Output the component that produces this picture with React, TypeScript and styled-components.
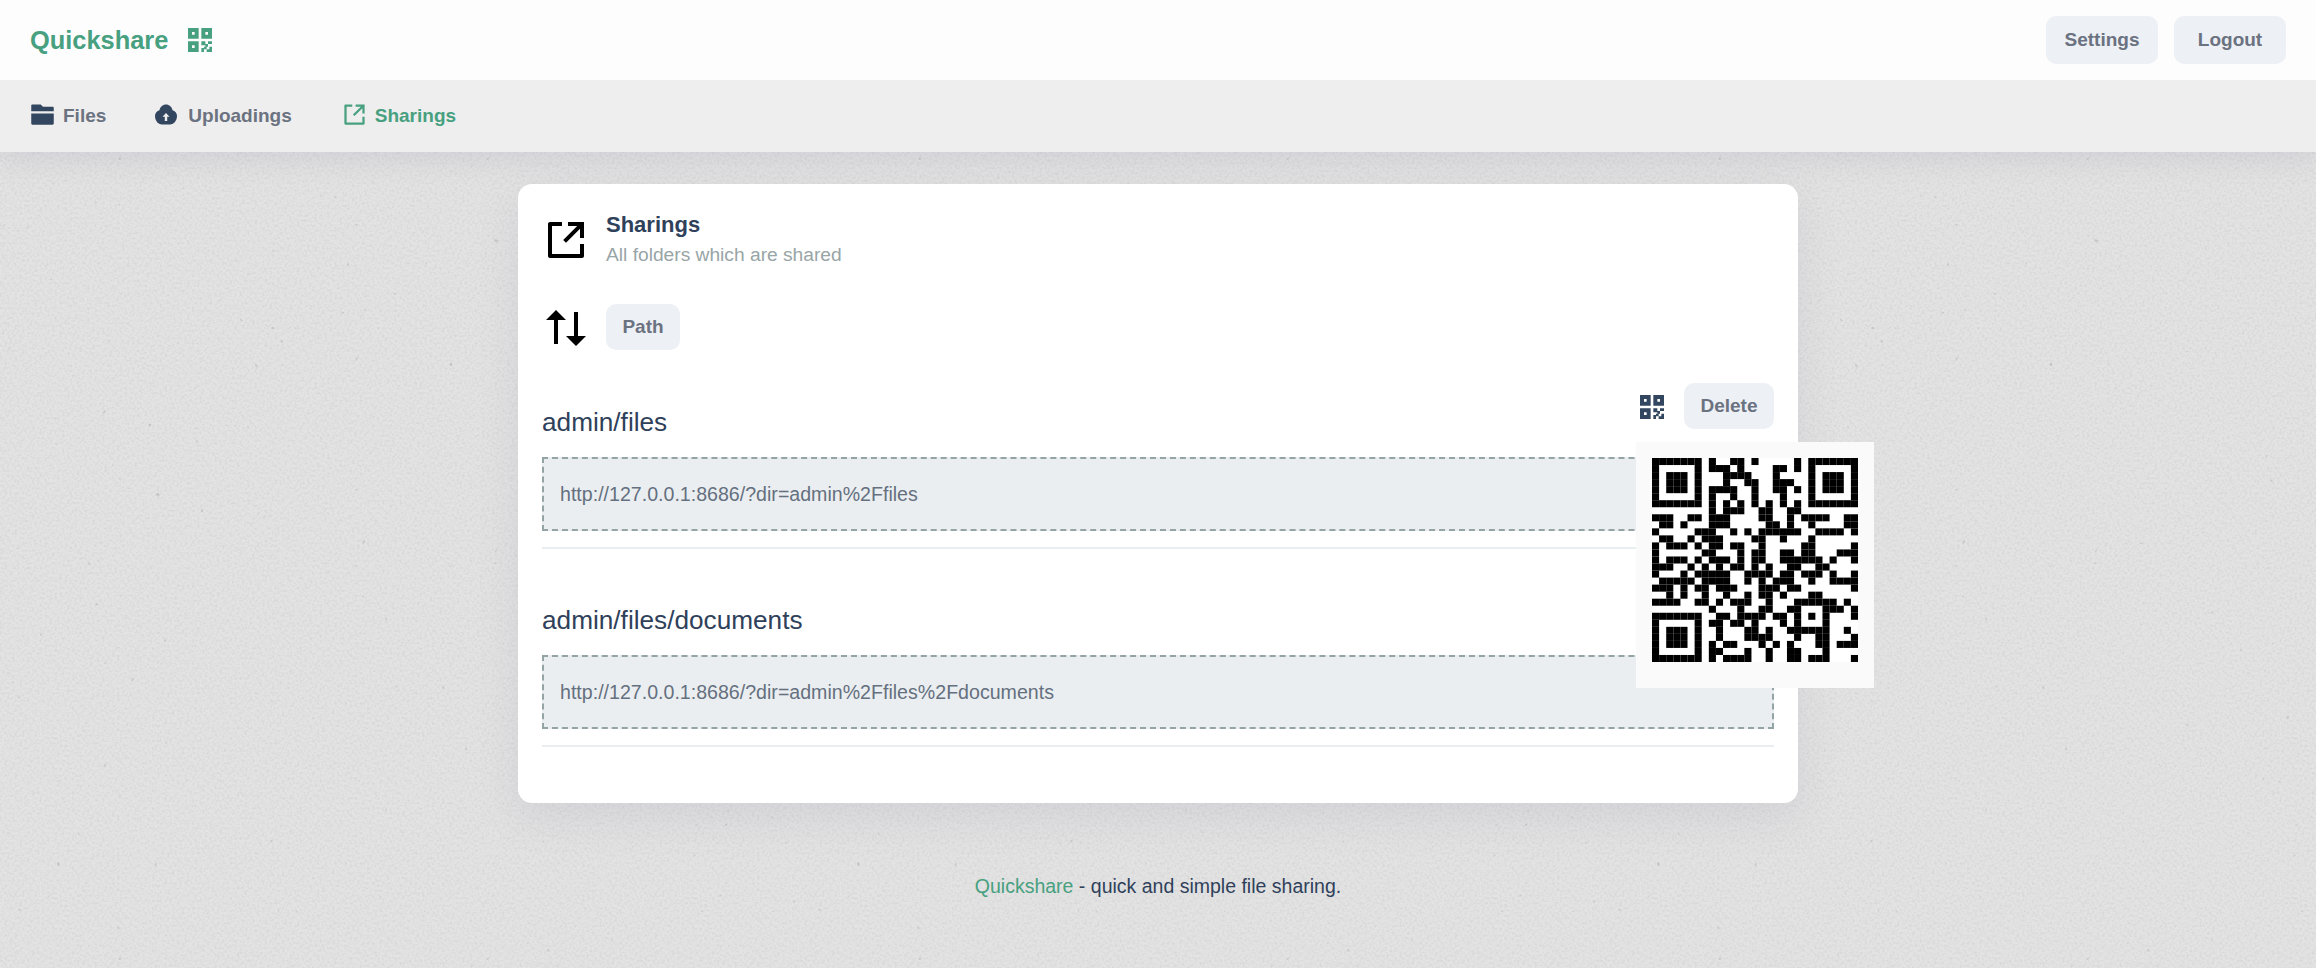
import React from "react";
import styled, { createGlobalStyle } from "styled-components";
import { RiQrCodeFill, RiFolder2Fill, RiShareBoxLine, RiArrowUpDownFill } from "react-icons/ri";

const noise = encodeURIComponent(
  `<svg xmlns='http://www.w3.org/2000/svg' width='800' height='800'><filter id='n' x='0' y='0' width='100%' height='100%'><feTurbulence type='fractalNoise' baseFrequency='0.4' numOctaves='5' seed='7' stitchTiles='stitch'/><feGaussianBlur stdDeviation='0.7'/><feColorMatrix values='0 0 0 0 0.55 0 0 0 0 0.55 0 0 0 0 0.55 0.9 0 0 0 -0.36'/></filter><filter id='s' x='0' y='0' width='100%' height='100%'><feTurbulence type='fractalNoise' baseFrequency='0.13' numOctaves='2' seed='23' stitchTiles='stitch'/><feColorMatrix values='0 0 0 0 0.5 0 0 0 0 0.5 0 0 0 0 0.5 8 0 0 0 -6.5'/><feGaussianBlur stdDeviation='0.6'/></filter><rect width='800' height='800' fill='#e3e3e3'/><rect width='800' height='800' filter='url(#n)'/><rect width='800' height='800' filter='url(#s)'/></svg>`
);

const Global = createGlobalStyle`
  html, body { margin: 0; padding: 0; }
  body {
    min-height: 100vh;
    font-family: "Liberation Sans", Arial, sans-serif;
    background: #dedede url("data:image/svg+xml,${noise}");
  }
  * { box-sizing: border-box; }
`;

const Page = styled.div`
  min-height: 968px;
  display: flex;
  flex-direction: column;
`;
const Header = styled.header`
  position: relative;
  z-index: 1;
  height: 80px;
  background: #fdfdfd;
  display: flex;
  align-items: center;
  justify-content: space-between;
  padding: 0 30px;
`;
const Brand = styled.div`
  display: flex;
  align-items: center;
  gap: 16px;
  color: #47a07f;
  font-size: 25.4px;
  font-weight: 700;
  svg { display: block; }
`;
const HeaderActions = styled.div`
  display: flex;
  gap: 16px;
`;
const Button = styled.button`
  height: ${(p) => (p.$h ? p.$h : 46)}px;
  width: ${(p) => p.$w}px;
  border: 0;
  border-radius: 10px;
  background: #edf0f5;
  color: #6b7280;
  font: 700 19px "Liberation Sans", Arial, sans-serif;
  padding: 0;
`;
const Nav = styled.nav`
  height: 72px;
  background: #eeeeee;
  display: flex;
  align-items: center;
  padding-left: 29px;
  gap: 49px;
  box-shadow: 0 8px 26px rgba(130, 130, 165, 0.16);
`;
const NavItem = styled.div`
  display: flex;
  align-items: center;
  gap: ${(p) => p.$gap}px;
  font-size: 19px;
  font-weight: 700;
  color: ${(p) => (p.$active ? "#47a07f" : "#6b7280")};
  svg { display: block; color: ${(p) => (p.$active ? "#47a07f" : "#334660")}; margin-top: -3px; }
`;
const Main = styled.main`
  padding-top: 32px;
  display: flex;
  justify-content: center;
`;
const Card = styled.section`
  width: 1280px;
  background: #fff;
  border-radius: 14px;
  padding: 32px 24px 24px;
  box-shadow: 0 14px 40px rgba(130, 130, 165, 0.14);
`;
const TitleRow = styled.div`
  display: flex;
  gap: 16px;
  align-items: flex-start;
  height: 48px;
  margin-bottom: 40px;
  svg { display: block; color: #000; }
`;
const TitleText = styled.div`
  display: flex;
  flex-direction: column;
`;
const Title = styled.div`
  font-size: 22px;
  font-weight: 700;
  line-height: 28px;
  margin-top: -5px;
  color: #2f415a;
`;
const Subtitle = styled.div`
  font-size: 19.2px;
  line-height: 24px;
  margin-top: 4px;
  color: #98a5a6;
`;
const SortRow = styled.div`
  display: flex;
  gap: 16px;
  align-items: flex-start;
  margin-bottom: 31px;
  svg { display: block; color: #000; }
`;
const Item = styled.div`
  margin-bottom: 32px;
`;
const ItemHead = styled.div`
  display: flex;
  justify-content: space-between;
  align-items: flex-end;
  height: 46px;
`;
const ItemTitle = styled.div`
  font-size: 26.2px;
  line-height: 30px;
  margin-bottom: -8px;
  color: #2f415a;
`;
const Controls = styled.div`
  display: flex;
  align-items: center;
  gap: 16px;
`;
const QrTrigger = styled.div`
  position: relative;
  width: 32px;
  height: 32px;
  margin-top: 2px;
  color: #334660;
  svg { display: block; }
`;
const Popup = styled.div`
  position: absolute;
  left: 0;
  top: 51px;
  width: 238px;
  height: 246px;
  padding: 16px 16px 26px;
  background: #fafafa;
  z-index: 5;
`;
const QrSvg = styled.svg`
  display: block !important;
  width: 206px;
  height: 204px;
  background: #fff;
`;
const UrlBox = styled.div`
  margin-top: 28px;
  height: 74px;
  display: flex;
  align-items: center;
  padding: 0 16px;
  background: #ebeef0;
  border: 2px dashed #94a3a3;
  color: #64707f;
  font-size: 19.6px;
`;
const Divider = styled.div`
  height: 2px;
  margin-top: 16px;
  background: #e9eef0;
`;
const Footer = styled.footer`
  padding-top: 72px;
  text-align: center;
  font-size: 19.5px;
  line-height: 22px;
  color: #2f415a;
`;
const FooterLink = styled.span`
  color: #47a07f;
`;

function encodeQr(text: string): boolean[][] {
  const n = 29;
  const exp: number[] = new Array(512).fill(0);
  const log: number[] = new Array(256).fill(0);
  let x = 1;
  for (let i = 0; i < 255; i++) {
    exp[i] = x;
    log[x] = i;
    x <<= 1;
    if (x & 256) x ^= 0x11d;
  }
  for (let i = 255; i < 512; i++) exp[i] = exp[i - 255];
  const bits: number[] = [];
  const push = (v: number, len: number) => {
    for (let i = len - 1; i >= 0; i--) bits.push((v >> i) & 1);
  };
  push(4, 4);
  push(text.length, 8);
  for (let i = 0; i < text.length; i++) push(text.charCodeAt(i), 8);
  push(0, 4);
  while (bits.length % 8) bits.push(0);
  const data: number[] = [];
  for (let i = 0; i < bits.length; i += 8) data.push(parseInt(bits.slice(i, i + 8).join(""), 2));
  for (let p = 0xec; data.length < 55; p = p === 0xec ? 0x11 : 0xec) data.push(p);
  let gen = [1];
  for (let i = 0; i < 15; i++) {
    const next = new Array(gen.length + 1).fill(0);
    gen.forEach((c, j) => {
      next[j] ^= c;
      next[j + 1] ^= c === 0 ? 0 : exp[log[c] + i];
    });
    gen = next;
  }
  const rem = [...data, ...new Array(15).fill(0)];
  for (let i = 0; i < 55; i++) {
    const c = rem[i];
    if (c) gen.forEach((g, j) => { if (g) rem[i + j] ^= exp[log[g] + log[c]]; });
  }
  const code = [...data, ...rem.slice(55)];
  const m: boolean[][] = Array.from({ length: n }, () => new Array(n).fill(false));
  const fixed: boolean[][] = Array.from({ length: n }, () => new Array(n).fill(false));
  const set = (r: number, c: number, v: boolean) => { m[r][c] = v; fixed[r][c] = true; };
  const finder = (r0: number, c0: number) => {
    for (let r = -1; r <= 7; r++) for (let c = -1; c <= 7; c++) {
      const rr = r0 + r, cc = c0 + c;
      if (rr < 0 || cc < 0 || rr >= n || cc >= n) continue;
      const dark = r >= 0 && r <= 6 && c >= 0 && c <= 6 && (r === 0 || r === 6 || c === 0 || c === 6 || (r >= 2 && r <= 4 && c >= 2 && c <= 4));
      set(rr, cc, dark);
    }
  };
  finder(0, 0); finder(0, n - 7); finder(n - 7, 0);
  for (let r = -2; r <= 2; r++) for (let c = -2; c <= 2; c++) set(22 + r, 22 + c, Math.max(Math.abs(r), Math.abs(c)) !== 1);
  for (let i = 8; i < n - 8; i++) { set(6, i, i % 2 === 0); set(i, 6, i % 2 === 0); }
  const fmt = "111001011110011".split("").map((b) => b === "1");
  for (let i = 0; i < 6; i++) set(8, i, fmt[i]);
  set(8, 7, fmt[6]); set(8, 8, fmt[7]); set(7, 8, fmt[8]);
  for (let i = 0; i < 6; i++) set(5 - i, 8, fmt[9 + i]);
  for (let i = 0; i < 7; i++) set(n - 1 - i, 8, fmt[i]);
  for (let i = 0; i < 8; i++) set(8, n - 8 + i, fmt[7 + i]);
  set(n - 8, 8, true);
  let idx = 0, up = true;
  for (let col = n - 1; col > 0; col -= 2) {
    if (col === 6) col--;
    for (let k = 0; k < n; k++) {
      const r = up ? n - 1 - k : k;
      for (const c of [col, col - 1]) {
        if (fixed[r][c]) continue;
        const byte = code[idx >> 3] ?? 0;
        const bit = ((byte >> (7 - (idx & 7))) & 1) === 1;
        idx++;
        m[r][c] = r % 2 === 0 ? !bit : bit;
      }
    }
    up = !up;
  }
  return m;
}

function Qr({ text }: { text: string }) {
  const m = encodeQr(text);
  return (
    <QrSvg viewBox="0 0 29 29" preserveAspectRatio="none">
      {m.flatMap((row, r) =>
        row.map((dark, c) => (dark ? <rect key={`${r}-${c}`} x={c} y={r} width={1} height={1} fill="#000" /> : null))
      )}
    </QrSvg>
  );
}

function UploadIcon() {
  return (
    <svg width="22" height="21" viewBox="0 0 22 21">
      <path d="M11 .5C14.3.5 17 3 17.5 6.2 20 6.8 22 9.1 22 11.8c0 4.8-3 8.7-7 8.7H7c-4 0-7-3.9-7-8.7C0 9.1 2 6.8 4.5 6.2 5 3 7.7.5 11 .5z" fill="currentColor" />
      <path d="M11 9l3.5 3.8h-2.3V17H9.8v-4.2H7.5z" fill="#eee" />
    </svg>
  );
}

const shares = ["admin/files", "admin/files/documents"];
const base = "http://127.0.0.1:8686/?dir=";

export default function App() {
  return (
    <Page>
      <Global />
      <Header>
        <Brand>
          Quickshare
          <RiQrCodeFill size={32} />
        </Brand>
        <HeaderActions>
          <Button $w={112} $h={48}>Settings</Button>
          <Button $w={112} $h={48}>Logout</Button>
        </HeaderActions>
      </Header>
      <Nav>
        <NavItem $gap={7}><RiFolder2Fill size={27} />Files</NavItem>
        <NavItem $gap={11}><UploadIcon />Uploadings</NavItem>
        <NavItem $gap={7} $active><RiShareBoxLine size={27} />Sharings</NavItem>
      </Nav>
      <Main>
        <Card>
          <TitleRow>
            <RiShareBoxLine size={48} />
            <TitleText>
              <Title>Sharings</Title>
              <Subtitle>All folders which are shared</Subtitle>
            </TitleText>
          </TitleRow>
          <SortRow>
            <RiArrowUpDownFill size={48} />
            <Button $w={74}>Path</Button>
          </SortRow>
          {shares.map((s, i) => (
            <Item key={s}>
              <ItemHead>
                <ItemTitle>{s}</ItemTitle>
                <Controls>
                  <QrTrigger>
                    <RiQrCodeFill size={32} />
                    {i === 0 && (
                      <Popup>
                        <Qr text={base + encodeURIComponent(s)} />
                      </Popup>
                    )}
                  </QrTrigger>
                  <Button $w={90}>Delete</Button>
                </Controls>
              </ItemHead>
              <UrlBox>{base + encodeURIComponent(s)}</UrlBox>
              <Divider />
            </Item>
          ))}
        </Card>
      </Main>
      <Footer>
        <FooterLink>Quickshare</FooterLink> - quick and simple file sharing.
      </Footer>
    </Page>
  );
}
